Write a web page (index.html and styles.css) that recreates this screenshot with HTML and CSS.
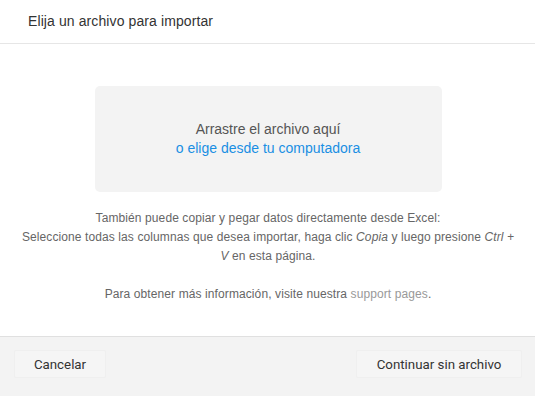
FILE: index.html
```html
<!DOCTYPE html>
<html lang="es">
<head>
<meta charset="utf-8">
<link rel="stylesheet" href="styles.css">
</head>
<body>
<div class="dialog">
  <header class="header">Elija un archivo para importar</header>
  <main class="content">
    <div class="dropzone">
      <div class="drop-text">Arrastre el archivo aquí</div>
      <a class="drop-link">o elige desde tu computadora</a>
    </div>
    <p class="info">También puede copiar y pegar datos directamente desde Excel:<br>Seleccione todas las columnas que desea importar, haga clic <em>Copia</em> y luego presione <em>Ctrl + V</em> en esta página.</p>
    <p class="info more">Para obtener más información, visite nuestra <a class="support">support pages</a>.</p>
  </main>
  <footer class="footer">
    <button class="btn btn-cancel">Cancelar</button>
    <button class="btn btn-continue">Continuar sin archivo</button>
  </footer>
</div>
</body>
</html>
```
FILE: styles.css
```css
html, body {
  margin: 0;
  padding: 0;
  background: #fff;
}
.dialog {
  width: 535px;
  height: 396px;
  display: flex;
  flex-direction: column;
  font-family: "Liberation Sans", Arial, sans-serif;
}
.header {
  height: 44px;
  box-sizing: border-box;
  border-bottom: 1px solid #e6e6e6;
  padding: 12px 0 0 28px;
  font-size: 14px;
  line-height: 18px;
  color: #333;
  letter-spacing: 0.1px;
}
.content {
  flex: 1;
  display: flex;
  flex-direction: column;
  align-items: center;
  padding: 42px 17px 0 18px;
}
.dropzone {
  width: 347px;
  height: 106px;
  box-sizing: border-box;
  background: #f3f3f3;
  border-radius: 5px;
  display: flex;
  flex-direction: column;
  align-items: center;
  justify-content: center;
  font-size: 14px;
  line-height: 19px;
}
.drop-text {
  color: #555;
}
.drop-link {
  color: #1a8fe3;
  cursor: pointer;
}
.info {
  margin: 17px 0 0;
  font-size: 12px;
  line-height: 19px;
  color: #666;
  text-align: center;
  letter-spacing: 0.1px;
}
.info.more {
  margin-top: 19px;
}
.support {
  color: #999;
}
.footer {
  height: 60px;
  box-sizing: border-box;
  border-top: 1px solid #e0e0e0;
  background: #f3f3f3;
  display: flex;
  justify-content: space-between;
  align-items: flex-start;
  padding: 13px 13px 0 14px;
}
.btn {
  height: 28px;
  box-sizing: border-box;
  padding: 0;
  border: 1px solid #efefef;
  border-radius: 2px;
  background: #f5f5f5;
  font-family: Roboto, "Liberation Sans", sans-serif;
  font-size: 13.3px;
  color: #333;
  white-space: nowrap;
}
.btn-cancel {
  width: 92px;
}
.btn-continue {
  width: 166px;
}
```
